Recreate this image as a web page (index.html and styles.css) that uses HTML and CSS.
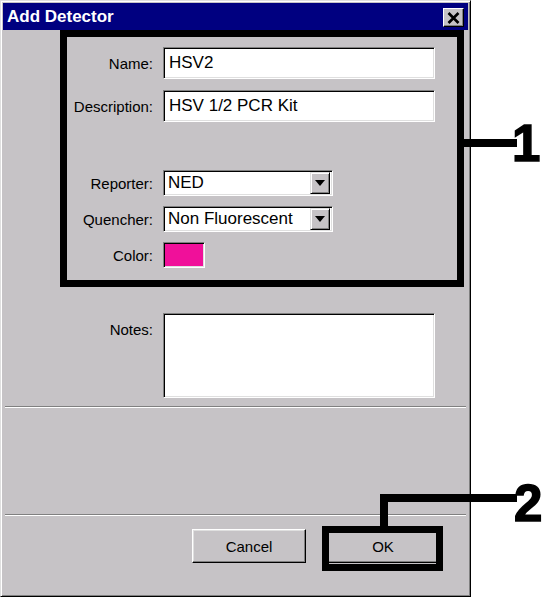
FILE: index.html
```html
<!DOCTYPE html>
<html>
<head>
<meta charset="utf-8">
<link rel="stylesheet" href="styles.css">
</head>
<body>
<div class="page">
  <div class="window">
    <div class="titlebar">
      <span class="title">Add Detector</span>
      <span class="close">
        <svg width="13" height="12" viewBox="0 0 13 12"><path d="M1.5 1 L11.5 11 M11.5 1 L1.5 11" stroke="#000" stroke-width="2.6" fill="none"/></svg>
      </span>
    </div>
    <div class="content">
      <div class="form">
        <div class="row row-name">
          <div class="label">Name:</div>
          <div class="field">HSV2</div>
        </div>
        <div class="row row-desc">
          <div class="label">Description:</div>
          <div class="field">HSV 1/2 PCR Kit</div>
        </div>
        <div class="row row-reporter">
          <div class="label">Reporter:</div>
          <div class="select"><span>NED</span><span class="arrow"><svg width="10" height="6" viewBox="0 0 10 6"><path d="M0 0 H10 L5 6 Z" fill="#000"/></svg></span></div>
        </div>
        <div class="row row-quencher">
          <div class="label">Quencher:</div>
          <div class="select"><span>Non Fluorescent</span><span class="arrow"><svg width="10" height="6" viewBox="0 0 10 6"><path d="M0 0 H10 L5 6 Z" fill="#000"/></svg></span></div>
        </div>
        <div class="row row-color">
          <div class="label">Color:</div>
          <div class="swatch"></div>
        </div>
        <div class="row row-notes">
          <div class="label label-top">Notes:</div>
          <div class="notes"></div>
        </div>
      </div>
      <div class="sep sep1"></div>
      <div class="sep sep2"></div>
      <div class="buttons">
        <div class="btn">Cancel</div>
        <div class="btn">OK</div>
      </div>
    </div>
  </div>

  <div class="frame frame1"></div>
  <div class="bar leader1"></div>
  <div class="num num1">1</div>

  <div class="frame frame2"></div>
  <div class="bar leader2h"></div>
  <div class="bar leader2v"></div>
  <div class="num num2">2</div>
</div>
</body>
</html>
```

FILE: styles.css
```css
* { box-sizing: border-box; }
html, body { margin: 0; padding: 0; background: #fff; }
body { font-family: "Liberation Sans", Arial, sans-serif; color: #000; }

.page { position: relative; width: 542px; height: 598px; overflow: hidden; }

.window {
  width: 471px;
  height: 597px;
  background: #c6c3c6;
  border: 1px solid;
  border-color: #dfdfdf #000 #000 #dfdfdf;
  box-shadow: inset 1px 1px #fff, inset -1px -1px #808080;
  padding: 2px;
  display: flex;
  flex-direction: column;
}

.titlebar {
  height: 27px;
  background: #000080;
  display: flex;
  align-items: center;
  justify-content: space-between;
  padding: 0 4px 0 4px;
  color: #fff;
  font-weight: bold;
  font-size: 17px;
}
.close {
  width: 21px;
  height: 19px;
  margin-top: 2px;
  background: #c6c3c6;
  border: 1px solid;
  border-color: #fff #000 #000 #fff;
  box-shadow: inset -1px -1px #808080;
  display: flex;
  align-items: center;
  justify-content: center;
}

.content { flex: 1; display: flex; flex-direction: column; }
.form { padding-top: 17px; display: flex; flex-direction: column; }
.row { display: flex; align-items: center; gap: 10px; }
.label { width: 150px; text-align: right; font-size: 15px; }
.label-top { align-self: flex-start; padding-top: 8px; }

.row-desc { margin-top: 11px; }
.row-reporter { margin-top: 48px; }
.row-quencher { margin-top: 10px; }
.row-color { margin-top: 10px; }
.row-notes { margin-top: 45px; }

.sunken {
  border: 1px solid;
}
.field, .select, .swatch, .notes {
  background: #fff;
  border: 1px solid;
  border-color: #808080 #fff #fff #808080;
  box-shadow: inset 1px 1px #000, inset -1px -1px #dfdfdf;
}
.field {
  width: 272px;
  height: 32px;
  font-size: 17px;
  padding-left: 5px;
  display: flex;
  align-items: center;
}
.select {
  width: 170px;
  height: 26px;
  font-size: 17px;
  padding: 2px 2px 2px 4px;
  display: flex;
  align-items: center;
  justify-content: space-between;
}
.arrow {
  width: 20px;
  height: 22px;
  background: #c6c3c6;
  border: 1px solid;
  border-color: #dfdfdf #000 #000 #dfdfdf;
  box-shadow: inset 1px 1px #fff, inset -1px -1px #808080;
  display: flex;
  align-items: center;
  justify-content: center;
}
.swatch {
  width: 42px;
  height: 26px;
  background: #f0109a;
}
.notes {
  width: 272px;
  height: 85px;
}

.sep {
  height: 2px;
  margin: 0 2px;
  border-top: 1px solid #808080;
  border-bottom: 1px solid #fff;
}
.sep1 { margin-top: 8px; }
.sep2 { margin-top: 106px; }

.buttons {
  margin-top: 13px;
  padding-left: 189px;
  display: flex;
  gap: 20px;
}
.btn {
  width: 114px;
  height: 34px;
  background: #c6c3c6;
  border: 1px solid;
  border-color: #fff #000 #000 #fff;
  box-shadow: inset -1px -1px #808080, inset 1px 1px #dfdfdf;
  font-size: 15px;
  display: flex;
  align-items: center;
  justify-content: center;
}

/* annotations overlaying the screenshot */
.frame { position: absolute; border: 7px solid #000; }
.frame1 { left: 60px; top: 30px; width: 404px; height: 257px; }
.frame2 { left: 322px; top: 526px; width: 121px; height: 45px; }
.bar { position: absolute; background: #000; }
.leader1 { left: 463px; top: 139px; width: 54px; height: 8px; }
.leader2h { left: 380px; top: 494px; width: 137px; height: 8px; }
.leader2v { left: 380px; top: 494px; width: 8px; height: 33px; }
.num {
  position: absolute;
  font-family: "Liberation Sans", Arial, sans-serif;
  font-weight: bold;
  font-size: 51px;
  line-height: 1;
  color: #000;
  -webkit-text-stroke: 1.5px #000;
}
.num1 { left: 512px; top: 118px; }
.num2 { left: 514px; top: 478px; }
```
